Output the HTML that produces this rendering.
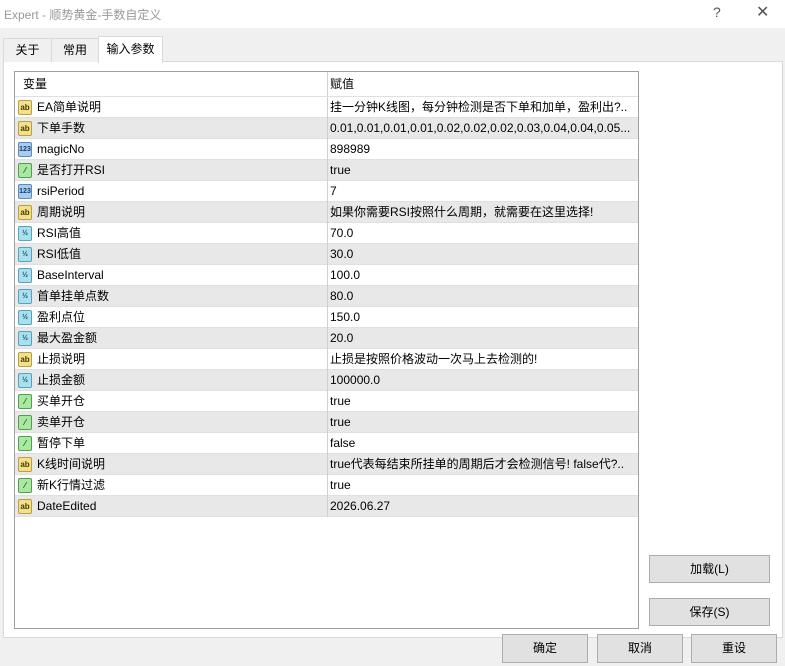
<html><head><style>
body{margin:0;width:785px;height:666px;background:#f0f0f0;font-family:"Liberation Sans","Noto Sans CJK SC",sans-serif;font-size:12px;color:#000;position:relative;overflow:hidden}
.a{position:absolute}
.title{left:0;top:0;width:785px;height:28px;background:#fff}
.tab{position:absolute;top:38px;height:23px;border:1px solid #d9d9d9;border-bottom:none;background:#f0f0f0;line-height:23px;text-align:center;font-size:12px}
.panel{left:3px;top:61px;width:778px;height:575px;background:#fff;border:1px solid #d9d9d9}
.grid{left:14px;top:71px;width:623px;height:556px;border:1px solid #a0a0a0;background:#fff}
.row{position:absolute;left:0;width:623px;height:21px;line-height:21px;border-bottom:1px solid #e0e0e0}
.row.g{background:#e8e8e8}
.row .n{position:absolute;left:22px}
.row .v{position:absolute;left:315px;white-space:nowrap}
.row .d{position:absolute;left:312px;top:0;width:1px;height:21px;background:#d0d0d0}
.ic{position:absolute;left:3px;top:3px;width:14px;height:15px;border-radius:2px;font-size:8px;line-height:15px;text-align:center;font-weight:bold}
.ab{background:#f2e08a;border:1px solid #b9a040;color:#4a3a00;width:12px;height:13px;line-height:13px}
.n3{background:#a8ccec;border:1px solid #5a8cc0;color:#1a3a70;width:12px;height:13px;line-height:13px;font-size:7px}
.bo{background:#a8e8a0;border:1px solid #50a050;color:#205020;width:12px;height:13px;line-height:13px}
.db{background:#a8e0ec;border:1px solid #5aa0c0;color:#1a4a70;width:12px;height:13px;line-height:13px;font-size:7px}
.btn{position:absolute;background:#e1e1e1;border:1px solid #adadad;text-align:center;font-size:12px}
</style></head><body>
<div class="a title"></div>
<div class="a" style="left:4px;top:6px;color:#999;font-size:12px">Expert - 顺势黄金-手数自定义</div>
<div class="a" style="left:713px;top:4px;color:#555;font-size:14px">?</div>
<div class="a" style="left:756px;top:2px;color:#555;font-size:16px">✕</div>
<div class="a panel"></div>
<div class="tab" style="left:3px;width:47px">关于</div>
<div class="tab" style="left:51px;width:46px">常用</div>
<div class="tab" style="left:98px;width:63px;top:36px;height:26px;background:#fff;line-height:25px">输入参数</div>
<div class="a grid">
<div class="row" style="top:0;height:24px;line-height:24px;border-bottom:1px solid #e0e0e0"><span class="n" style="left:8px">变量</span><span class="d" style="height:24px"></span><span class="v">赋值</span></div>
<div id="rows"></div>
</div>
<div class="btn" style="left:649px;top:555px;width:119px;height:26px;line-height:26px">加载(L)</div>
<div class="btn" style="left:649px;top:598px;width:119px;height:26px;line-height:26px">保存(S)</div>
<div class="btn" style="left:502px;top:634px;width:84px;height:27px;line-height:27px">确定</div>
<div class="btn" style="left:597px;top:634px;width:84px;height:27px;line-height:27px">取消</div>
<div class="btn" style="left:691px;top:634px;width:84px;height:27px;line-height:27px">重设</div>
<script>
var d=[["ab","EA简单说明","挂一分钟K线图，每分钟检测是否下单和加单，盈利出?.."],["ab","下单手数","0.01,0.01,0.01,0.01,0.02,0.02,0.02,0.03,0.04,0.04,0.05..."],["n3","magicNo","898989"],["bo","是否打开RSI","true"],["n3","rsiPeriod","7"],["ab","周期说明","如果你需要RSI按照什么周期，就需要在这里选择!"],["db","RSI高值","70.0"],["db","RSI低值","30.0"],["db","BaseInterval","100.0"],["db","首单挂单点数","80.0"],["db","盈利点位","150.0"],["db","最大盈金额","20.0"],["ab","止损说明","止损是按照价格波动一次马上去检测的!"],["db","止损金额","100000.0"],["bo","买单开仓","true"],["bo","卖单开仓","true"],["bo","暂停下单","false"],["ab","K线时间说明","true代表每结束所挂单的周期后才会检测信号! false代?.."],["bo","新K行情过滤","true"],["ab","DateEdited","2026.06.27"]];
var lab={ab:"ab",n3:"123",bo:"⁄",db:"½"};
var h="";d.forEach(function(r,i){h+='<div class="row'+(i%2?' g':'')+'" style="top:'+(25+i*21)+'px;height:20px"><span class="ic '+r[0]+'">'+lab[r[0]]+'</span><span class="n">'+r[1]+'</span><span class="d"></span><span class="v">'+r[2]+'</span></div>';});
document.getElementById("rows").outerHTML=h;
</script>
</body></html>
